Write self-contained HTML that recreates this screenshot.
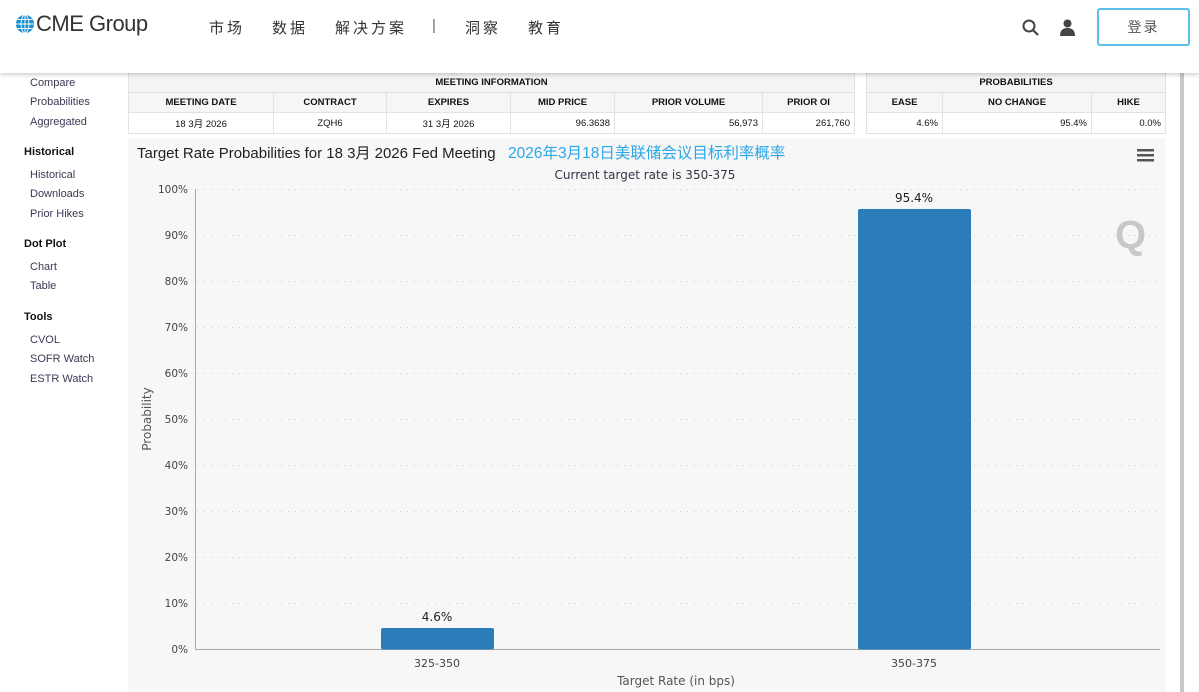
<!DOCTYPE html>
<html><head><meta charset="utf-8"><style>
*{margin:0;padding:0;box-sizing:border-box}
body{width:1199px;height:692px;overflow:hidden;background:#fff;font-family:"Liberation Sans","Noto Sans CJK SC",sans-serif;position:relative}
.hdr{position:absolute;left:0;top:0;width:1199px;height:73px;background:#fff;box-shadow:0 2px 4px rgba(0,0,0,.18);z-index:5}
.logo{position:absolute;left:15px;top:11px;font-size:22px;color:#333;letter-spacing:-0.5px}
.nav{position:absolute;top:17px;font-size:15px;color:#333;letter-spacing:3px}
.btn{position:absolute;left:1097px;top:8px;width:93px;height:38px;border:2px solid #5bc0e8;border-radius:3px;font-size:14px;color:#555;text-align:center;line-height:34px;letter-spacing:2px}
.side{position:absolute;left:0;font-size:11px;color:#3a3a55}
.side.h{font-weight:bold;color:#111;font-size:11px;left:24px}
.side.i{left:30px}
table{position:absolute;border-collapse:collapse;font-size:9.5px;color:#111}
td{border:1px solid #e2e2e2;height:21px;padding:0 4px}
td.t{font-weight:bold;text-align:center;background:#f4f4f4;height:25px}
tr.c td{font-weight:bold;text-align:center;background:#f6f6f6;height:20px}
tr.d td{text-align:right}
.chart{position:absolute;left:128px;top:138px;width:1037px;height:554px;background:#f7f7f7}
.sb{position:absolute;left:1180px;top:73px;width:4px;height:619px;background:#c8c8c8}
</style></head><body>
<div class="hdr">
<div class="logo"><svg width="20" height="20" viewBox="0 0 20 20" style="vertical-align:-3px;margin-right:1px"><circle cx="10" cy="10" r="9" fill="#1a8fd0"/><g stroke="#fff" stroke-width="0.9" fill="none"><ellipse cx="10" cy="10" rx="4" ry="9"/><line x1="10" y1="1" x2="10" y2="19"/><line x1="1" y1="10" x2="19" y2="10"/><line x1="2.5" y1="5.5" x2="17.5" y2="5.5"/><line x1="2.5" y1="14.5" x2="17.5" y2="14.5"/></g></svg>CME Group</div>
<div class="nav" style="left:209px">市场</div>
<div class="nav" style="left:272px">数据</div>
<div class="nav" style="left:335px">解决方案</div>
<div class="nav" style="left:432px;color:#666">|</div>
<div class="nav" style="left:465px">洞察</div>
<div class="nav" style="left:528px">教育</div>
<svg style="position:absolute;left:1022px;top:19px" width="18" height="18" viewBox="0 0 18 18"><circle cx="7" cy="7" r="5.5" stroke="#444" stroke-width="2" fill="none"/><line x1="11" y1="11" x2="16" y2="16" stroke="#444" stroke-width="2.2"/></svg>
<svg style="position:absolute;left:1060px;top:19px" width="15" height="17" viewBox="0 0 15 17"><circle cx="7.5" cy="4.5" r="4" fill="#444"/><path d="M0 17 Q0 9 7.5 9 Q15 9 15 17Z" fill="#444"/></svg>
<div class="btn">登录</div>
</div>
<div class="side i" style="top:77px">Compare</div>
<div class="side i" style="top:96px">Probabilities</div>
<div class="side i" style="top:116px">Aggregated</div>
<div class="side h" style="top:146px">Historical</div>
<div class="side i" style="top:169px">Historical</div>
<div class="side i" style="top:188px">Downloads</div>
<div class="side i" style="top:208px">Prior Hikes</div>
<div class="side h" style="top:238px">Dot Plot</div>
<div class="side i" style="top:261px">Chart</div>
<div class="side i" style="top:280px">Table</div>
<div class="side h" style="top:311px">Tools</div>
<div class="side i" style="top:334px">CVOL</div>
<div class="side i" style="top:353px">SOFR Watch</div>
<div class="side i" style="top:373px">ESTR Watch</div>

<table style="left:128px;top:67px;width:727px">
<tr><td class="t" colspan="6" style="vertical-align:bottom;padding-bottom:4px">MEETING INFORMATION</td></tr>
<tr class="c"><td style="width:145px">MEETING DATE</td><td style="width:113px">CONTRACT</td><td style="width:124px">EXPIRES</td><td style="width:104px">MID PRICE</td><td style="width:148px">PRIOR VOLUME</td><td>PRIOR OI</td></tr>
<tr class="d"><td style="text-align:center">18 3月 2026</td><td style="text-align:center">ZQH6</td><td style="text-align:center">31 3月 2026</td><td>96.3638</td><td>56,973</td><td>261,760</td></tr>
</table>
<table style="left:866px;top:67px;width:300px">
<tr><td class="t" colspan="3" style="vertical-align:bottom;padding-bottom:4px">PROBABILITIES</td></tr>
<tr class="c"><td style="width:76px">EASE</td><td style="width:149px">NO CHANGE</td><td>HIKE</td></tr>
<tr class="d"><td>4.6%</td><td>95.4%</td><td>0.0%</td></tr>
</table>

<div class="chart"></div>
<svg style="position:absolute;left:0;top:0" width="1199" height="692" font-family="'Liberation Sans','Noto Sans CJK SC',sans-serif">
<text x="137" y="158" font-size="15" fill="#222">Target Rate Probabilities for 18 3月 2026 Fed Meeting</text>
<text x="508" y="158" font-size="15.5" fill="#2aa7e8">2026年3月18日美联储会议目标利率概率</text>
<text x="645" y="179" font-size="12" fill="#334" text-anchor="middle" font-family="'DejaVu Sans',sans-serif">Current target rate is 350-375</text>
<g fill="#555"><rect x="1137" y="149" width="17" height="2.5"/><rect x="1137" y="154" width="17" height="2.5"/><rect x="1137" y="159" width="17" height="2.5"/></g>
<g stroke="#ccc" stroke-dasharray="1,6" stroke-width="1">
<line x1="197" y1="189.5" x2="1160" y2="189.5"/><line x1="197" y1="235.5" x2="1160" y2="235.5"/><line x1="197" y1="281.5" x2="1160" y2="281.5"/><line x1="197" y1="327.5" x2="1160" y2="327.5"/><line x1="197" y1="373.5" x2="1160" y2="373.5"/><line x1="197" y1="419.5" x2="1160" y2="419.5"/><line x1="197" y1="465.5" x2="1160" y2="465.5"/><line x1="197" y1="511.5" x2="1160" y2="511.5"/><line x1="197" y1="557.5" x2="1160" y2="557.5"/><line x1="197" y1="603.5" x2="1160" y2="603.5"/>
</g>
<line x1="195.5" y1="189" x2="195.5" y2="649" stroke="#aaa"/>
<line x1="195" y1="649.5" x2="1160" y2="649.5" stroke="#aaa"/>
<g font-size="10.5" fill="#444" text-anchor="end" font-family="'DejaVu Sans',sans-serif">
<text x="188" y="193">100%</text><text x="188" y="239">90%</text><text x="188" y="285">80%</text><text x="188" y="331">70%</text><text x="188" y="377">60%</text><text x="188" y="423">50%</text><text x="188" y="469">40%</text><text x="188" y="515">30%</text><text x="188" y="561">20%</text><text x="188" y="607">10%</text><text x="188" y="653">0%</text>
</g>
<text x="151" y="419" font-size="12" fill="#555" text-anchor="middle" transform="rotate(-90 151 419)" font-family="'DejaVu Sans',sans-serif">Probability</text>
<text x="1115" y="248" font-size="40" font-weight="bold" fill="#c8c8c8">Q</text>
<rect x="381" y="628" width="113" height="21.5" rx="2" fill="#2a7db8"/>
<rect x="858" y="209" width="113" height="440.5" rx="2" fill="#2a7db8"/>
<g font-size="12" fill="#222" text-anchor="middle" font-family="'DejaVu Sans',sans-serif">
<text x="437" y="621">4.6%</text><text x="914" y="202">95.4%</text></g>
<g font-size="11" fill="#444" text-anchor="middle" font-family="'DejaVu Sans',sans-serif">
<text x="437" y="667">325-350</text><text x="914" y="667">350-375</text>
<text x="676" y="685" font-size="12" fill="#555">Target Rate (in bps)</text></g>
</svg>
<div class="sb"></div>
</body></html>
